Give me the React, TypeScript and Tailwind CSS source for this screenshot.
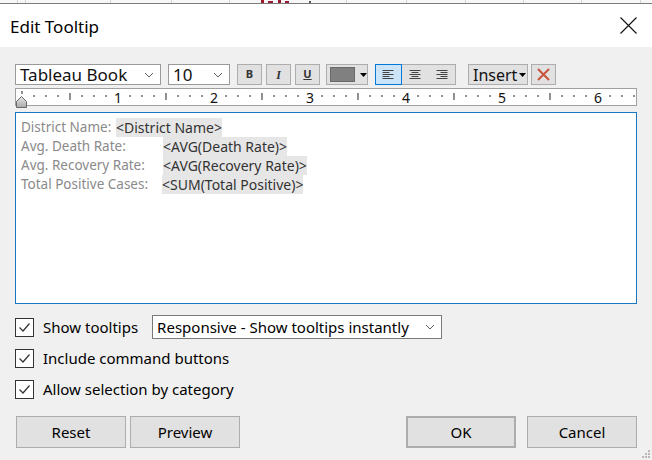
import React from "react";

const Chevron = () => (
  <svg width="10" height="6" viewBox="0 0 10 6" className="shrink-0">
    <path d="M1 1 L5 5 L9 1" fill="none" stroke="#606060" strokeWidth="1" />
  </svg>
);

const Caret = () => (
  <svg width="7" height="4" viewBox="0 0 7 4" className="shrink-0">
    <path d="M0 0 L7 0 L3.5 4 Z" fill="#000" />
  </svg>
);

const Check = () => (
  <div className="w-[19px] h-[19px] border border-[#333] bg-white flex items-center justify-center shrink-0">
    <svg width="15" height="15" viewBox="0 0 15 15">
      <path d="M2.5 7.5 L6 11 L12.5 3.5" fill="none" stroke="#333" strokeWidth="1.2" />
    </svg>
  </div>
);

const AlignIcon = ({ mode }: { mode: "l" | "c" | "r" }) => {
  const widths = [11, 7, 11, 7, 11];
  return (
    <svg width="12" height="10" viewBox="0 0 12 10">
      {widths.map((w, i) => {
        const x = mode === "l" ? 0.5 : mode === "c" ? (12 - w) / 2 : 11.5 - w;
        return <rect key={i} x={x} y={i * 2} width={w} height={1} fill="#444" />;
      })}
    </svg>
  );
};

const Ruler = () => {
  const ticks: React.ReactNode[] = [];
  const nums: { x: number; n: number }[] = [];
  for (let k = 1; k <= 51; k++) {
    const x = 6 + 12 * k;
    if (k % 8 === 0) {
      nums.push({ x, n: k / 8 });
    } else if (k % 4 === 0) {
      ticks.push(<rect key={k} x={x - 0.5} y={4} width={1} height={7} fill="#222" />);
    } else {
      ticks.push(<rect key={k} x={x - 0.5} y={6} width={1} height={2} fill="#222" />);
    }
  }
  return (
    <div className="relative mt-[3px] h-[18px] bg-white border border-[#a0a0a0]">
      <svg width="619" height="16" viewBox="0 0 619 16" className="absolute left-0 top-0">
        <rect x={5.5} y={2} width={1} height={3} fill="#222" />
        {ticks}
      </svg>
      {nums.map(({ x, n }) => (
        <span
          key={n}
          className="absolute top-[1px] w-[12px] -ml-[6px] text-center text-[14px] leading-[15px] text-[#111]"
          style={{ left: x }}
        >
          {n}
        </span>
      ))}
      <svg width="12" height="12" viewBox="0 0 12 12" className="absolute left-[0px] top-[7px]">
        <defs>
          <linearGradient id="mg" x1="0" y1="0" x2="0" y2="1">
            <stop offset="0" stopColor="#e8e8e8" />
            <stop offset="1" stopColor="#a8a8a8" />
          </linearGradient>
        </defs>
        <path d="M0.5 11.5 L0.5 5.5 L5.5 0.5 L10.5 5.5 L10.5 11.5 Z" fill="url(#mg)" stroke="#6a6a6a" strokeWidth="1" />
      </svg>
    </div>
  );
};

export default function App() {
  const font = "font-['Noto_Sans',sans-serif]";
  const btn =
    "h-[32px] bg-[#e1e1e1] border border-[#adadad] flex items-center justify-center text-[15px] text-black";
  const label = "text-[13.5px] text-[#8a8a8a] whitespace-nowrap";
  const field = "text-[14px] bg-[#e6e6e6] text-[#333] whitespace-nowrap";
  return (
    <div className={`w-[652px] h-[460px] bg-[#f0f0f0] relative overflow-hidden ${font}`}>
      {/* background strip */}
      <div className="h-[4px] bg-[#f7f7f7] border-b border-[#7c7c7c] relative">
        <svg width="652" height="3" viewBox="0 0 652 3" className="absolute left-0 top-0">
          {[17, 25, 110, 171, 229, 346, 406, 465, 523, 581, 640].map((x) => (
            <rect key={x} x={x} y={0} width={1} height={3} fill="#d4d4d4" />
          ))}
          <rect x={261} y={0} width={3} height={3} fill="#9b1b30" />
          <rect x={268} y={1} width={5} height={2} fill="#9b1b30" />
          <rect x={278} y={0} width={3} height={3} fill="#9b1b30" />
          <rect x={285} y={1} width={4} height={2} fill="#9b1b30" />
          <rect x={309} y={1} width={2} height={2} fill="#555" />
        </svg>
      </div>
      {/* title bar */}
      <div className="h-[43px] bg-white flex items-center justify-between pl-[10px] pr-[15px]">
        <span className="text-[17px] text-black leading-none mt-[1px]">Edit Tooltip</span>
        <svg width="17" height="17" viewBox="0 0 17 17">
          <path d="M0.5 0.5 L16.5 16.5 M16.5 0.5 L0.5 16.5" stroke="#111" strokeWidth="1.1" />
        </svg>
      </div>
      {/* body */}
      <div className="px-[15px] pt-[17px] flex flex-col">
        {/* toolbar */}
        <div className="flex items-center h-[21px]">
          <div className="w-[146px] h-[21px] bg-white border border-[#9a9a9a] flex items-center justify-between pl-[4px] pr-[6px]">
            <span className="text-[17px] leading-none text-[#111]">Tableau Book</span>
            <Chevron />
          </div>
          <div className="ml-[7px] w-[62px] h-[21px] bg-white border border-[#9a9a9a] flex items-center justify-between pl-[4px] pr-[6px]">
            <span className="text-[17px] leading-none text-[#111]">10</span>
            <Chevron />
          </div>
          <div className="ml-[7px] w-[25px] h-[21px] bg-[#e1e1e1] border border-[#adadad] flex items-center justify-center text-[11px] font-bold text-[#333]">
            B
          </div>
          <div className="ml-[4px] w-[25px] h-[21px] bg-[#e1e1e1] border border-[#adadad] flex items-center justify-center text-[12px] font-bold italic text-[#333] font-['Liberation_Serif',serif]">
            I
          </div>
          <div className="ml-[4px] w-[25px] h-[21px] bg-[#e1e1e1] border border-[#adadad] flex items-center justify-center text-[11px] font-bold underline text-[#333]">
            U
          </div>
          <div className="ml-[6px] w-[42px] h-[21px] bg-[#e1e1e1] border border-[#adadad] flex items-center pl-[3px] gap-[5px]">
            <div className="w-[25px] h-[15px] bg-[#808080] border border-[#6a6a6a]" />
            <Caret />
          </div>
          <div className="ml-[7px] w-[81px] h-[21px] bg-[#e1e1e1] border border-[#adadad] flex">
            <div className="w-[27px] h-[21px] -mt-[1px] -ml-[1px] bg-[#cce4f7] border border-[#0078d7] flex items-center justify-center">
              <AlignIcon mode="l" />
            </div>
            <div className="w-[27px] flex items-center justify-center">
              <AlignIcon mode="c" />
            </div>
            <div className="w-[27px] flex items-center justify-center">
              <AlignIcon mode="r" />
            </div>
          </div>
          <div className="ml-[12px] w-[60px] h-[21px] bg-[#e1e1e1] border border-[#adadad] flex items-center pl-[4px] gap-[2px]">
            <span className="text-[16px] leading-none text-[#111]">Insert</span>
            <Caret />
          </div>
          <div className="ml-[3px] w-[25px] h-[21px] bg-[#e1e1e1] border border-[#adadad] flex items-center justify-center">
            <svg width="13" height="13" viewBox="0 0 13 13">
              <path d="M1 1 L12 12 M12 1 L1 12" stroke="#c9543b" strokeWidth="2" />
            </svg>
          </div>
        </div>
        <Ruler />
        {/* text area */}
        <div className="mt-[6px] h-[192px] bg-white border border-[#1a78c2] pl-[5px] pt-[5px] leading-[19px]">
          <div className="flex">
            <span className={`w-[95px] ${label}`}>District Name:</span>
            <span className={field}>&lt;District Name&gt;</span>
          </div>
          <div className="flex">
            <span className={`w-[142px] ${label}`}>Avg. Death Rate:</span>
            <span className={field}>&lt;AVG(Death Rate)&gt;</span>
          </div>
          <div className="flex">
            <span className={`w-[142px] ${label}`}>Avg. Recovery Rate:</span>
            <span className={field}>&lt;AVG(Recovery Rate)&gt;</span>
          </div>
          <div className="flex">
            <span className={`w-[141px] ${label}`}>Total Positive Cases:</span>
            <span className={field}>&lt;SUM(Total Positive)&gt;</span>
          </div>
        </div>
        {/* options */}
        <div className="mt-[11px] flex items-center h-[24px]">
          <Check />
          <span className="ml-[9px] text-[15px] text-black leading-none">Show tooltips</span>
          <div className="ml-[14px] w-[290px] h-[24px] bg-white border border-[#7a7a7a] flex items-center justify-between pl-[4px] pr-[6px]">
            <span className="text-[15px] leading-none text-black">Responsive - Show tooltips instantly</span>
            <Chevron />
          </div>
        </div>
        <div className="mt-[10px] flex items-center h-[19px]">
          <Check />
          <span className="ml-[9px] text-[15px] text-black leading-none">Include command buttons</span>
        </div>
        <div className="mt-[12px] flex items-center h-[19px]">
          <Check />
          <span className="ml-[9px] text-[15px] text-black leading-none">Allow selection by category</span>
        </div>
        {/* buttons */}
        <div className="mt-[17px] flex items-center pl-[1px]">
          <div className={`${btn} w-[110px]`}>Reset</div>
          <div className={`${btn} w-[110px] ml-[4px]`}>Preview</div>
          <div className="flex-1" />
          <div className={`${btn} w-[110px] border-2 border-[#0078d7]`}>OK</div>
          <div className={`${btn} w-[110px] ml-[11px]`}>Cancel</div>
        </div>
      </div>
      {/* resize grip */}
      <svg width="8" height="8" viewBox="0 0 8 8" className="absolute right-[2px] bottom-[2px]">
        {[
          [6, 0],
          [6, 3],
          [3, 3],
          [6, 6],
          [3, 6],
          [0, 6],
        ].map(([x, y], i) => (
          <rect key={i} x={x} y={y} width={2} height={2} fill="#b8b8b8" />
        ))}
      </svg>
    </div>
  );
}
